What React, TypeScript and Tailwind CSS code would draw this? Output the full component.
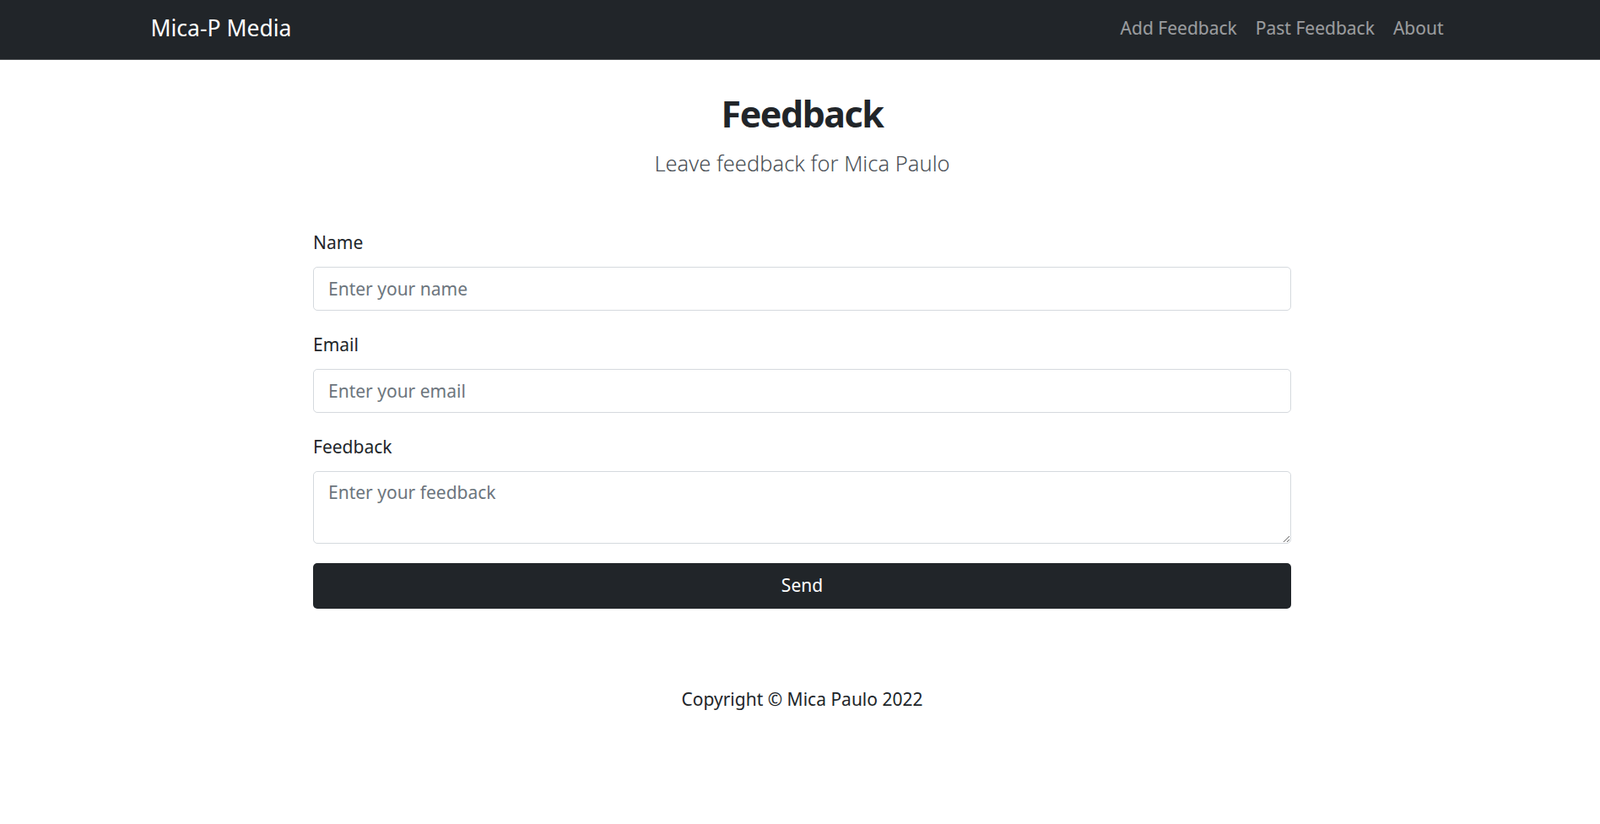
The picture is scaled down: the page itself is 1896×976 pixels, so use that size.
import React from 'react';

const NavBar = () => {
  const links = ['Add Feedback', 'Past Feedback', 'About'];
  return (
    <nav className="h-[71px] bg-[#212529] border-b border-[#4a4d50]">
      <div className="w-[1547px] mx-auto pl-[4px] h-full flex items-center justify-between pb-[5px]">
        <a href="#" className="text-white text-[26.5px] leading-[40px]">
          Mica-P Media
        </a>
        <ul className="flex items-center">
          {links.map((link) => (
            <li key={link}>
              <a href="#" className="block px-[11px] text-[21px] leading-[32px] text-white/55">
                {link}
              </a>
            </li>
          ))}
        </ul>
      </div>
    </nav>
  );
};

const Field = ({ label, placeholder }: { label: string; placeholder: string }) => (
  <div className="mb-[24px]">
    <label className="block text-[21px] leading-[32px] mb-[13px] text-[#212529]">{label}</label>
    <input
      type="text"
      placeholder={placeholder}
      className="block w-full h-[52px] px-[17px] text-[21px] text-[#212529] border border-[#d5d9de] rounded-[5px] placeholder:text-[#6c757d] outline-none"
    />
  </div>
);

const App = () => {
  return (
    <div className="min-h-screen bg-white" style={{ fontFamily: '"Noto Sans", "Open Sans", sans-serif' }}>
      <NavBar />

      <main className="pl-[5px] pt-[37px]">
        <div className="text-center">
          <h1 className="text-[43px] leading-[53px] font-bold tracking-[-1.5px] text-[#212529]">Feedback</h1>
          <p className="mt-[13px] text-[25.5px] leading-[38px] font-light text-[#4a5056]">
            Leave feedback for Mica Paulo
          </p>
        </div>

        <form className="w-[1159px] mx-auto mt-[59px]">
          <Field label="Name" placeholder="Enter your name" />
          <Field label="Email" placeholder="Enter your email" />
          <div>
            <label className="block text-[21px] leading-[32px] mb-[13px] text-[#212529]">Feedback</label>
            <textarea
              placeholder="Enter your feedback"
              className="block w-full h-[86px] px-[17px] py-[8px] text-[21px] leading-[32px] text-[#212529] border border-[#d5d9de] rounded-[5px] placeholder:text-[#6c757d] outline-none resize-y"
            />
          </div>
          <button
            type="button"
            className="mt-[23px] w-full h-[54px] bg-[#212529] text-white text-[21px] rounded-[5px]"
          >
            Send
          </button>
        </form>

        <footer className="mt-[91px] text-center text-[21px] leading-[32px] text-[#212529]">
          Copyright © Mica Paulo 2022
        </footer>
      </main>
    </div>
  );
};

export default App;
